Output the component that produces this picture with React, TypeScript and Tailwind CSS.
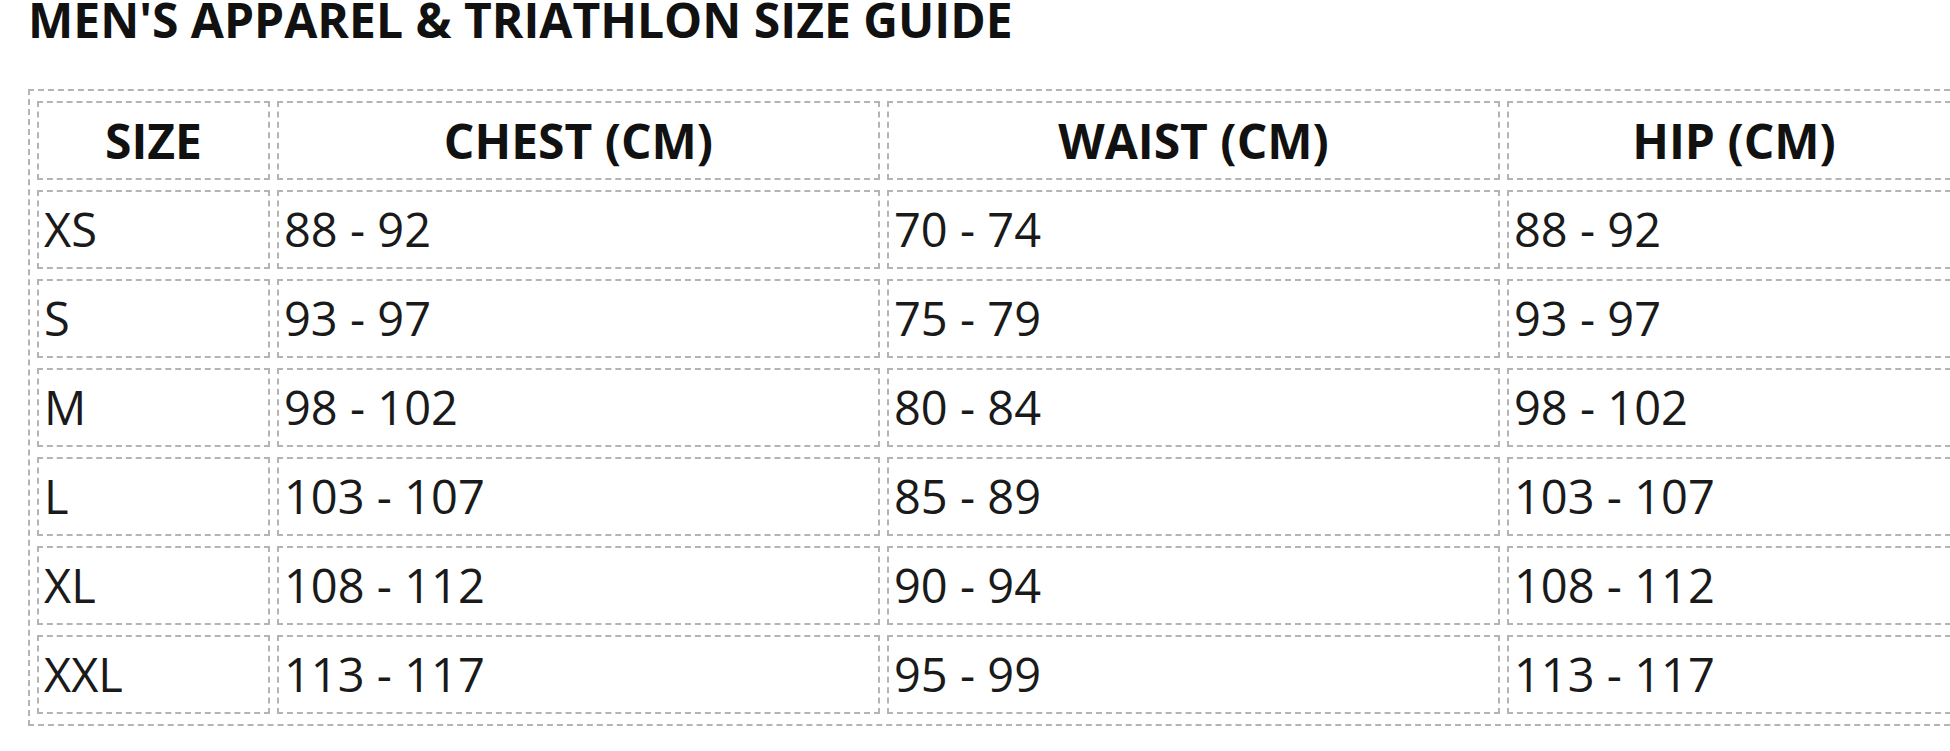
import React from "react";

const rows: [string, string, string, string][] = [
  ["XS", "88 - 92", "70 - 74", "88 - 92"],
  ["S", "93 - 97", "75 - 79", "93 - 97"],
  ["M", "98 - 102", "80 - 84", "98 - 102"],
  ["L", "103 - 107", "85 - 89", "103 - 107"],
  ["XL", "108 - 112", "90 - 94", "108 - 112"],
  ["XXL", "113 - 117", "95 - 99", "113 - 117"],
];

const cell =
  "border-2 border-dashed border-[#b4b4b4] h-[79px] p-0 align-middle";

export default function App() {
  return (
    <div
      className="w-[1950px] h-[751px] overflow-hidden bg-white text-[#1a1a1a]"
      style={{ fontFamily: '"Open Sans", "Noto Sans", sans-serif' }}
    >
      <div className="pl-[28px]">
        <h1 className="text-[48px] leading-[40px] font-bold text-[#111] whitespace-nowrap">
          MEN'S APPAREL &amp; TRIATHLON SIZE GUIDE
        </h1>
        <table className="mt-[49px] table-fixed border-separate border-spacing-x-[7px] border-spacing-y-[10px] border-2 border-dashed border-[#b4b4b4] w-[1942px] text-[47px]">
          <thead>
            <tr>
              <th className={`${cell} w-[233px] text-center font-bold text-[48px] text-[#111]`}>SIZE</th>
              <th className={`${cell} w-[603px] text-center font-bold text-[48px] text-[#111]`}>CHEST (CM)</th>
              <th className={`${cell} w-[613px] text-center font-bold text-[48px] text-[#111]`}>WAIST (CM)</th>
              <th className={`${cell} w-[454px] text-center font-bold text-[48px] text-[#111]`}>HIP (CM)</th>
            </tr>
          </thead>
          <tbody>
            {rows.map((r) => (
              <tr key={r[0]}>
                {r.map((v, i) => (
                  <td key={i} className={`${cell} text-left pl-[5px] font-normal`}>
                    {v}
                  </td>
                ))}
              </tr>
            ))}
          </tbody>
        </table>
      </div>
    </div>
  );
}
